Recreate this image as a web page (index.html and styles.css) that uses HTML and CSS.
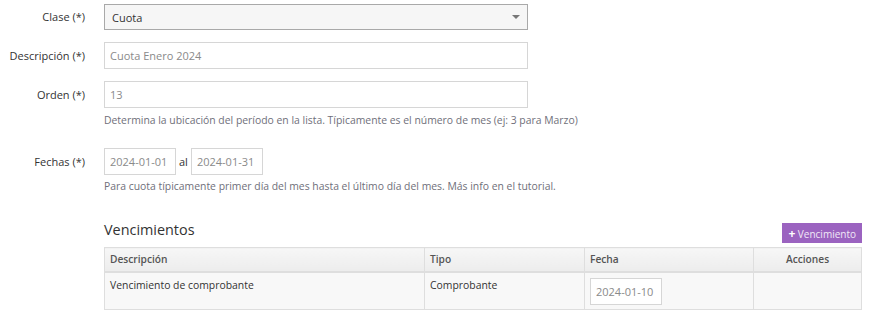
FILE: index.html
```html
<!DOCTYPE html>
<html lang="es">
<head>
    <meta charset="UTF-8">
    <title>Periodo</title>
    <link rel="stylesheet" href="styles.css">
</head>
<body>

    <div class="form">
        <div class="row row-select">
            <label>Clase (*)</label>
            <div class="field">
                <div class="select">
                    <span>Cuota</span>
                    <span class="caret"></span>
                </div>
            </div>
        </div>

        <div class="row">
            <label>Descripción (*)</label>
            <div class="field">
                <input type="text" class="wide" value="Cuota Enero 2024">
            </div>
        </div>

        <div class="row">
            <label>Orden (*)</label>
            <div class="field">
                <input type="text" class="wide" value="13">
                <p class="help">Determina la ubicación del período en la lista. Típicamente es el número de mes (ej: 3 para Marzo)</p>
            </div>
        </div>

        <div class="row fechas">
            <label>Fechas (*)</label>
            <div class="field">
                <div class="dates">
                    <input type="text" class="date" value="2024-01-01">
                    <span class="al">al</span>
                    <input type="text" class="date" value="2024-01-31">
                </div>
                <p class="help">Para cuota típicamente primer día del mes hasta el último día del mes. Más info en el tutorial.</p>
            </div>
        </div>
    </div>

    <div class="vencimientos">
        <div class="section-head">
            <h3>Vencimientos</h3>
            <button class="btn-add"><span class="plus">+</span> Vencimiento</button>
        </div>
        <table>
            <thead>
                <tr>
                    <th class="col-desc">Descripción</th>
                    <th class="col-tipo">Tipo</th>
                    <th class="col-fecha">Fecha</th>
                    <th class="col-acc">Acciones</th>
                </tr>
            </thead>
            <tbody>
                <tr>
                    <td>Vencimiento de comprobante</td>
                    <td>Comprobante</td>
                    <td><input type="text" class="date cell-date" value="2024-01-10"></td>
                    <td></td>
                </tr>
            </tbody>
        </table>
    </div>

</body>
</html>
```

FILE: styles.css
```css
body {
    margin: 0;
    padding-top: 4px;
    font-family: "Open Sans", sans-serif;
    font-size: 11px;
    color: #333;
    background: #fff;
}

.row {
    display: grid;
    grid-template-columns: 85px auto;
    column-gap: 19px;
    margin-bottom: 12px;
}

.row label {
    text-align: right;
    line-height: 27px;
    color: #333;
}

.row-select label {
    line-height: 26px;
}

.fechas {
    margin-top: 20px;
}

input {
    box-sizing: border-box;
    height: 27px;
    border: 1px solid #d6d6d6;
    padding: 0 5px;
    font-family: "Open Sans", sans-serif;
    font-size: 11px;
    color: #8a8a8a;
    background: #fff;
    outline: none;
}

.wide {
    width: 424px;
}

.select {
    box-sizing: border-box;
    width: 424px;
    height: 26px;
    border: 1px solid #a9a9a9;
    background: #f6f6f6;
    display: flex;
    align-items: center;
    justify-content: space-between;
    padding: 0 7px 0 7px;
    color: #333;
}

.caret {
    width: 0;
    height: 0;
    border-left: 4px solid transparent;
    border-right: 4px solid transparent;
    border-top: 4px solid #777;
}

.help {
    margin: 4px 0 0;
    font-size: 10.4px;
    line-height: 16px;
    color: #6f6f7a;
    white-space: nowrap;
}

.fechas .help {
    margin-top: 3px;
}

.dates {
    display: flex;
    align-items: center;
}

.date {
    width: 72px;
}

.al {
    margin: 0 3px 0 3px;
    color: #333;
}

.vencimientos {
    margin: 26px 0 0 104px;
    width: 758px;
}

.section-head {
    display: flex;
    justify-content: space-between;
    align-items: flex-end;
    margin-bottom: 4px;
}

.section-head h3 {
    margin: 0 0 3px;
    font-size: 14.4px;
    font-weight: normal;
    color: #333;
    line-height: 20px;
}

.btn-add {
    height: 20px;
    padding: 0 6px;
    border: none;
    background: #9b63c0;
    color: #f1e8f7;
    font-family: "Open Sans", sans-serif;
    font-size: 10px;
}

.plus {
    font-weight: bold;
    font-size: 12px;
    color: #fff;
}

table {
    width: 758px;
    border-collapse: collapse;
    border: 1px solid #dedede;
    table-layout: fixed;
}

th {
    height: 24px;
    box-sizing: border-box;
    background: linear-gradient(#f7f7f7, #ececec);
    border: 1px solid #dedede;
    border-bottom: 2px solid #dedede;
    text-align: left;
    padding: 0 5px;
    font-size: 10.2px;
    font-weight: 600;
    color: #555;
}

.col-desc { width: 320px; }
.col-tipo { width: 160px; }
.col-fecha { width: 169px; }
.col-acc { text-align: center; }

td {
    height: 37px;
    box-sizing: border-box;
    background: #f8f8f8;
    border: 1px solid #dedede;
    vertical-align: top;
    padding: 4px 5px 4px;
    font-size: 10.4px;
    line-height: 16px;
    color: #333;
}

.cell-date {
    display: block;
    margin-top: 1px;
}
```
